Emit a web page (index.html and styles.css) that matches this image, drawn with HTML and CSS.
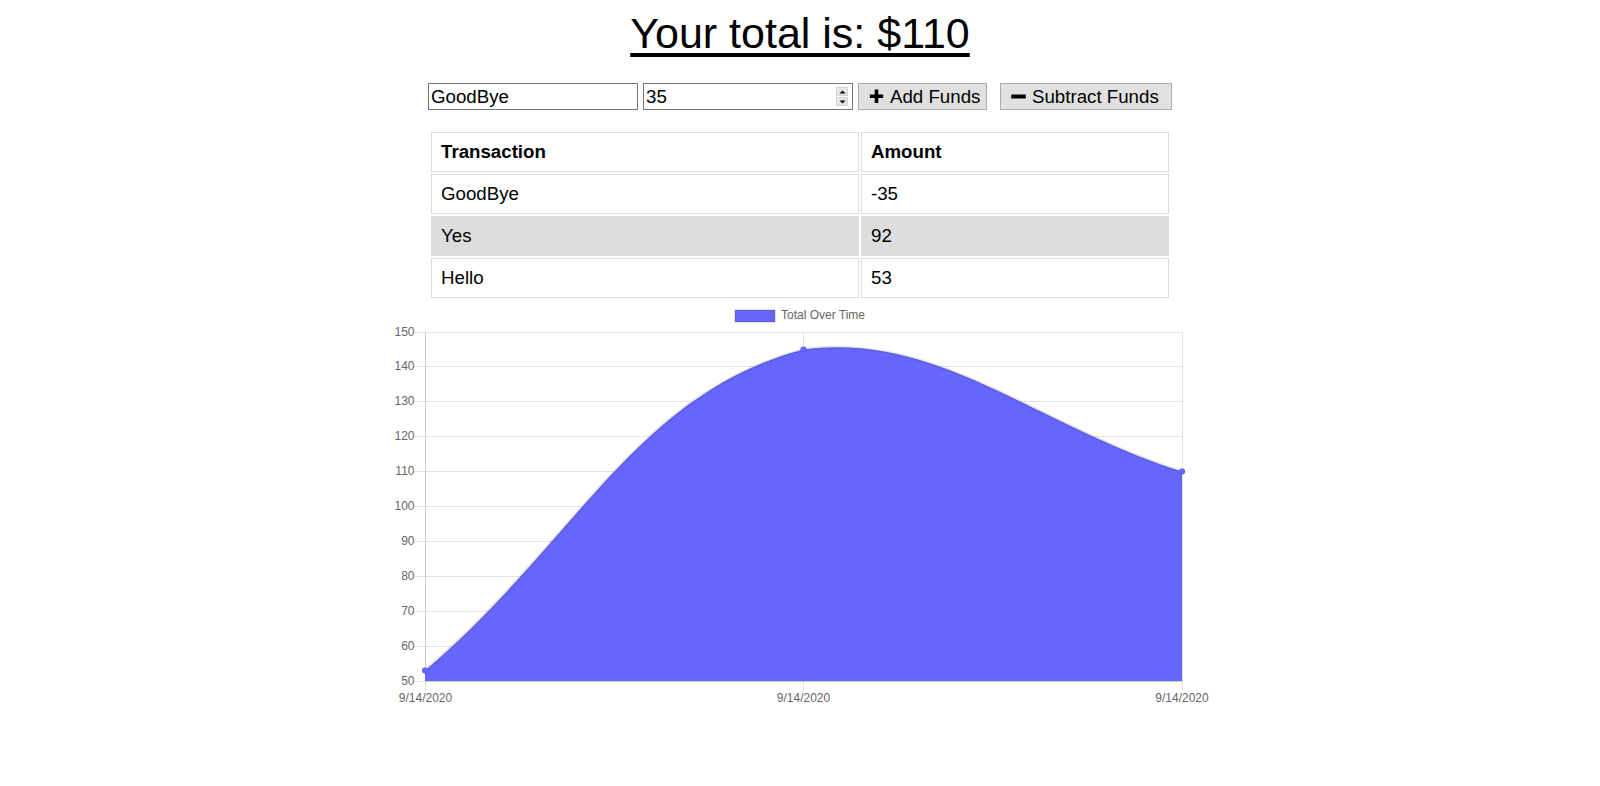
FILE: index.html
```html
<!DOCTYPE html>
<html lang="en">
<head>
<meta charset="utf-8">
<title>Budget Tracker</title>
<link rel="stylesheet" href="styles.css">
</head>
<body>
<main class="page">
  <h1 class="total"><span class="total-text">Your total is: $110</span></h1>

  <form class="entry">
    <input class="field" type="text" value="GoodBye" aria-label="Transaction name">
    <span class="number-wrap">
      <input class="field field-number" type="number" value="35" aria-label="Amount">
      <span class="spin" aria-hidden="true">
        <span class="spin-half"><svg viewBox="0 0 7 4"><path d="M0.5 3.5L3.5 0.5L6.5 3.5Z"/></svg></span>
        <span class="spin-half"><svg viewBox="0 0 7 4"><path d="M0.5 0.5L3.5 3.5L6.5 0.5Z"/></svg></span>
      </span>
    </span>
    <button class="btn btn-add" type="button">
      <svg class="icon" viewBox="0 0 15 15" aria-hidden="true"><path d="M5.7 0.6h3.6v4.9h4.9v3.6h-4.9v4.9h-3.6v-4.9h-4.9v-3.6h4.9z"/></svg>
      <span>Add Funds</span>
    </button>
    <button class="btn btn-sub" type="button">
      <svg class="icon" viewBox="0 0 15 15" aria-hidden="true"><rect x="0.2" y="5.5" width="14.6" height="4" rx="0.5"/></svg>
      <span>Subtract Funds</span>
    </button>
  </form>

  <table class="tx">
    <colgroup><col class="col-name"><col class="col-amount"></colgroup>
    <thead>
      <tr><th>Transaction</th><th>Amount</th></tr>
    </thead>
    <tbody>
      <tr><td>GoodBye</td><td>-35</td></tr>
      <tr class="alt"><td>Yes</td><td>92</td></tr>
      <tr><td>Hello</td><td>53</td></tr>
    </tbody>
  </table>

  <svg class="chart" width="848" height="410" viewBox="0 0 848 410" aria-label="Total Over Time chart">
    <!-- legend -->
    <rect x="359" y="10" width="40" height="12" fill="#6666ff" stroke="rgba(0,0,0,0.1)" stroke-width="2"/>
    <text class="legend-label" x="405" y="19.3">Total Over Time</text>

    <!-- horizontal grid lines (y axis) -->
    <g stroke="rgba(0,0,0,0.1)" stroke-width="1">
      <line x1="39" x2="806.5" y1="32.5" y2="32.5"/>
      <line x1="39" x2="806.5" y1="66.5" y2="66.5"/>
      <line x1="39" x2="806.5" y1="101.5" y2="101.5"/>
      <line x1="39" x2="806.5" y1="136.5" y2="136.5"/>
      <line x1="39" x2="806.5" y1="171.5" y2="171.5"/>
      <line x1="39" x2="806.5" y1="206.5" y2="206.5"/>
      <line x1="39" x2="806.5" y1="241.5" y2="241.5"/>
      <line x1="39" x2="806.5" y1="276.5" y2="276.5"/>
      <line x1="39" x2="806.5" y1="311.5" y2="311.5"/>
      <line x1="39" x2="806.5" y1="346.5" y2="346.5"/>
      <line x1="39" x2="806.5" y1="381.5" y2="381.5"/>
      <!-- axis borders -->
      <line x1="49.5" x2="49.5" y1="32" y2="382"/>
      <line x1="49" x2="806.5" y1="381.5" y2="381.5"/>
      <!-- vertical grid lines (x axis) -->
      <line x1="49.5" x2="49.5" y1="32" y2="391"/>
      <line x1="427.5" x2="427.5" y1="32" y2="391"/>
      <line x1="806.5" x2="806.5" y1="32" y2="391"/>
    </g>

    <!-- y labels -->
    <g class="tick">
      <text x="38.5" y="36.3">150</text>
      <text x="38.5" y="70.3">140</text>
      <text x="38.5" y="105.3">130</text>
      <text x="38.5" y="140.3">120</text>
      <text x="38.5" y="175.3">110</text>
      <text x="38.5" y="210.3">100</text>
      <text x="38.5" y="245.3">90</text>
      <text x="38.5" y="280.3">80</text>
      <text x="38.5" y="315.3">70</text>
      <text x="38.5" y="350.3">60</text>
      <text x="38.5" y="385.3">50</text>
    </g>

    <!-- x labels -->
    <g class="tick tick-x">
      <text x="49.5" y="401.5">9/14/2020</text>
      <text x="427.5" y="401.5">9/14/2020</text>
      <text x="806" y="401.5">9/14/2020</text>
    </g>

    <!-- area -->
    <path d="M49 370.5 C200.4 242.1 259.4 93.6 427.5 49.5 C562.2 32 654.6 122.7 806 171.6 L806 381 L49 381 Z" fill="#6666ff"/>
    <path d="M49 370.5 C200.4 242.1 259.4 93.6 427.5 49.5 C562.2 32 654.6 122.7 806 171.6" fill="none" stroke="rgba(0,0,0,0.1)" stroke-width="3"/>

    <!-- points -->
    <g fill="#6666ff" stroke="rgba(0,0,0,0.1)" stroke-width="1">
      <circle cx="49" cy="370.5" r="3"/>
      <circle cx="427.5" cy="49.5" r="3"/>
      <circle cx="806" cy="171.6" r="3"/>
    </g>
  </svg>
</main>
</body>
</html>
```

FILE: styles.css
```css
* {
  box-sizing: border-box;
}

body {
  margin: 0;
  background: #fff;
  color: #000;
  font-family: "Liberation Sans", Arial, sans-serif;
}

.page {
  padding-top: 9px;
}

.total {
  margin: 0;
  font-size: 43px;
  font-weight: normal;
  line-height: 48px;
  text-align: center;
}

.total-text {
  text-decoration: underline;
  text-decoration-thickness: 4px;
  text-underline-offset: 4.5px;
}

.entry {
  display: flex;
  justify-content: center;
  gap: 5px;
  margin: 26px 0 0;
}

.field {
  width: 210px;
  height: 27px;
  margin: 0;
  padding: 1px 2px;
  border: 1px solid #767676;
  border-radius: 0;
  background: #fff;
  color: #000;
  font-family: "Liberation Sans", Arial, sans-serif;
  font-size: 18.7px;
}

.number-wrap {
  position: relative;
  display: block;
}

.field-number {
  display: block;
  padding-right: 20px;
  -moz-appearance: textfield;
}

.field-number::-webkit-inner-spin-button,
.field-number::-webkit-outer-spin-button {
  -webkit-appearance: none;
  margin: 0;
}

.spin {
  position: absolute;
  top: 4px;
  right: 5px;
  display: flex;
  flex-direction: column;
  gap: 1px;
  width: 12px;
  height: 19px;
}

.spin-half {
  display: flex;
  flex: 1;
  align-items: center;
  justify-content: center;
  background: #e6e6e6;
  border: 1px solid #d4d4d4;
}

.spin-half svg {
  width: 7px;
  height: 4px;
  fill: #000;
}

.btn {
  display: flex;
  align-items: center;
  height: 27px;
  margin: 0;
  padding: 0 0 0 10px;
  border: 1px solid #adadad;
  border-radius: 0;
  background: #e1e1e1;
  color: #000;
  font-family: "Liberation Sans", Arial, sans-serif;
  font-size: 18.7px;
  white-space: nowrap;
}

.btn-add {
  width: 129px;
}

.btn-sub {
  width: 172px;
  margin-left: 8px;
}

.icon {
  width: 15px;
  height: 15px;
  margin-right: 6px;
  fill: #000;
}

.tx {
  width: 742px;
  margin: 20px auto 0;
  border-spacing: 2px;
  table-layout: fixed;
  font-size: 18.7px;
}

.col-name {
  width: 428px;
}

.col-amount {
  width: 308px;
}

.tx th,
.tx td {
  height: 40px;
  padding: 0 9px;
  border: 1px solid #ddd;
  line-height: 38px;
  text-align: left;
  vertical-align: middle;
}

.tx th {
  font-weight: bold;
}

.tx .alt td {
  background: #ddd;
}

.chart {
  display: block;
  margin: 0 auto;
}

.tick text,
.legend-label {
  font-family: "Liberation Sans", Arial, sans-serif;
  font-size: 12px;
  fill: #666;
}

.tick text {
  text-anchor: end;
}

.tick-x text {
  text-anchor: middle;
}
```
